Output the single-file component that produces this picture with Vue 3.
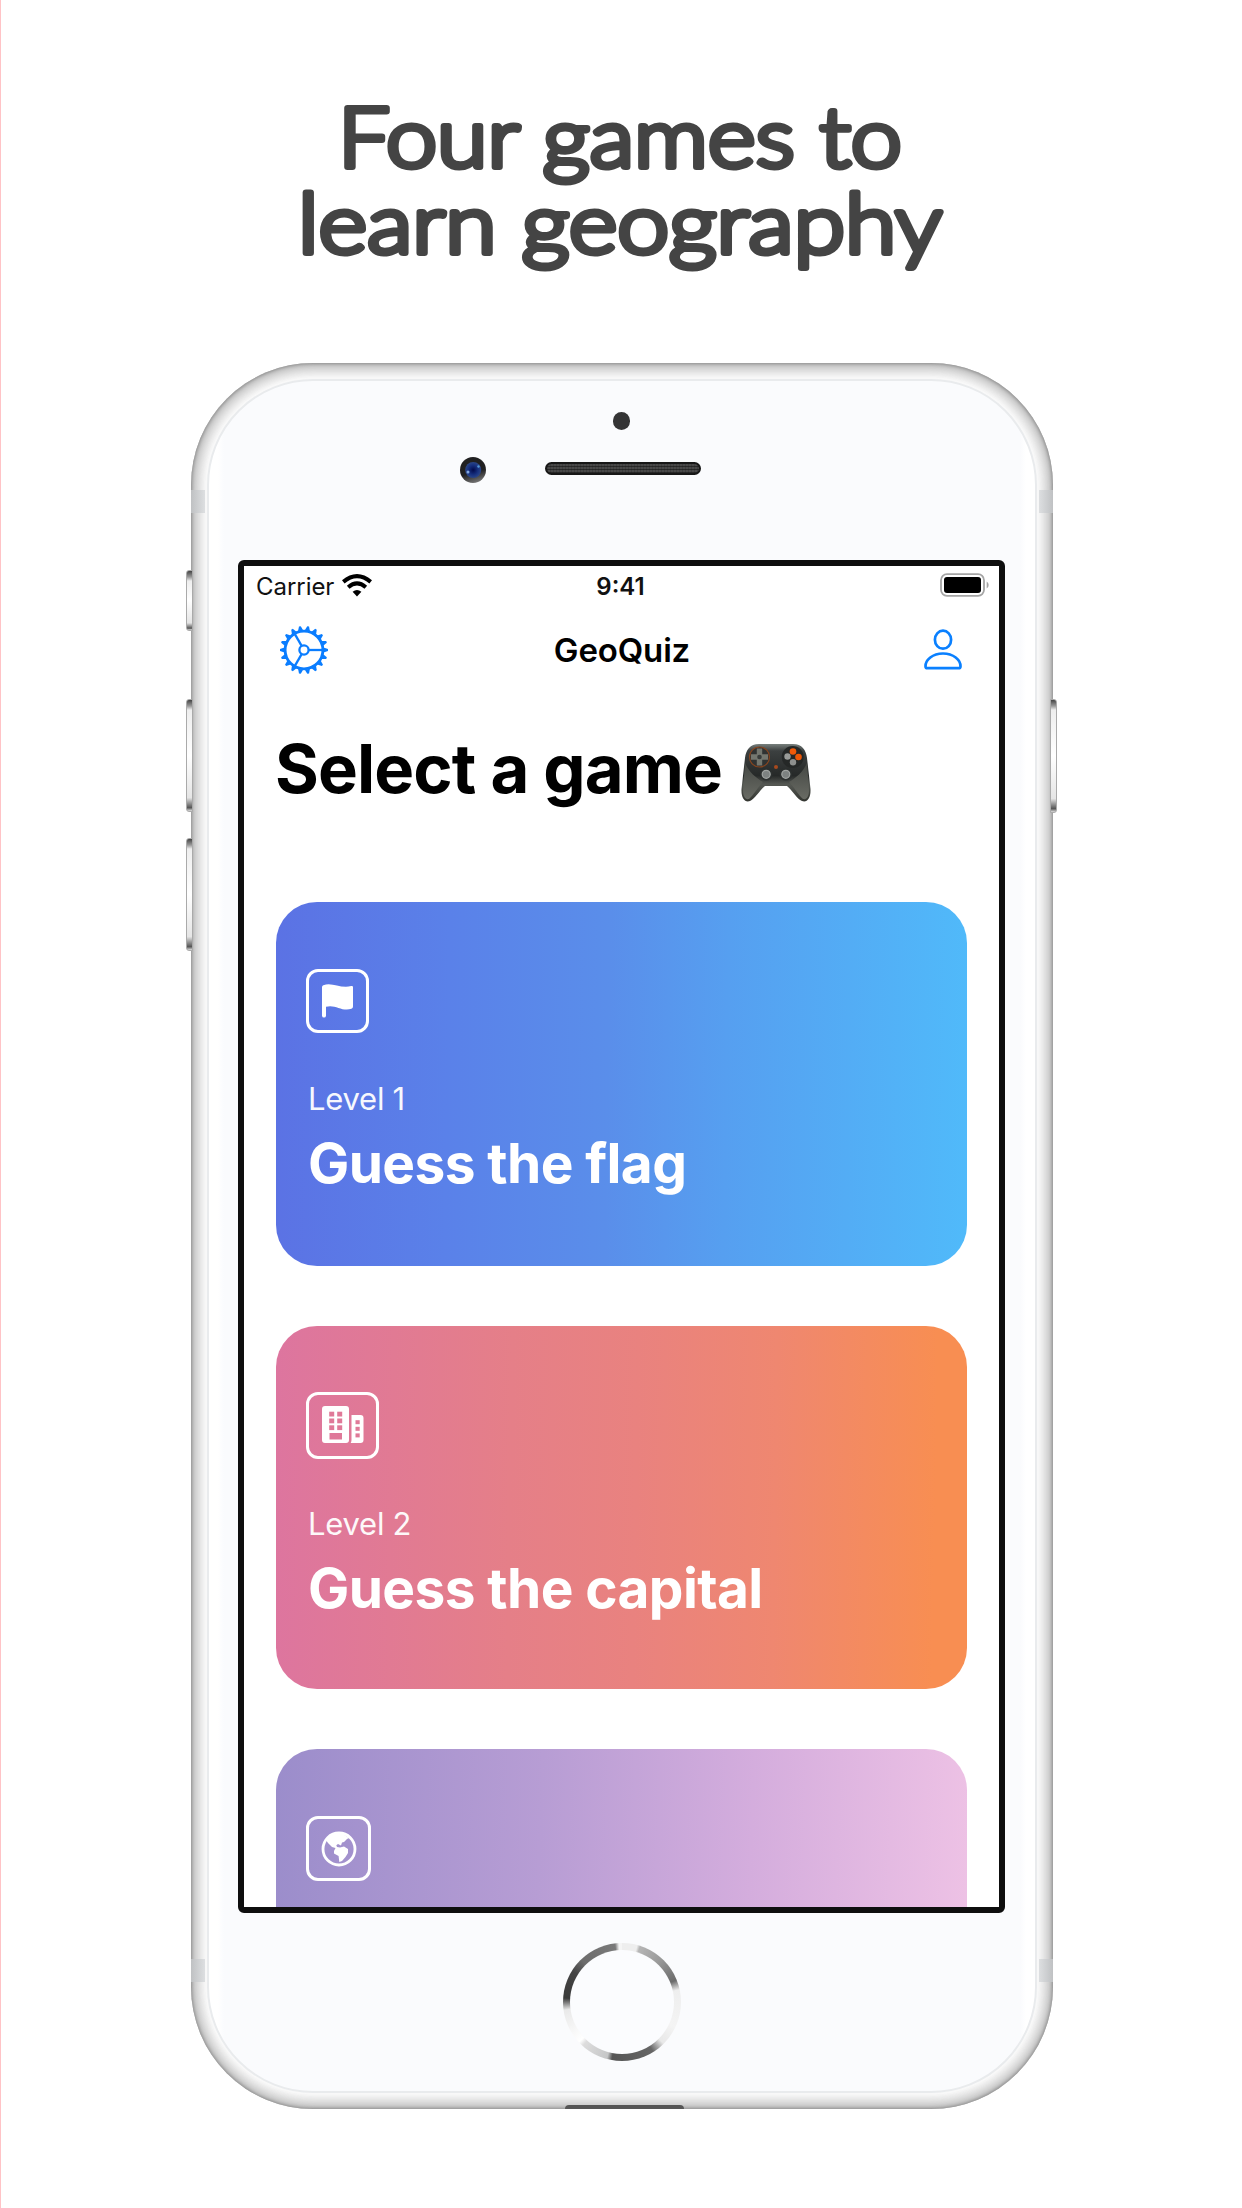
<script setup>
const games = [
  { id: 'flag', level: 'Level 1', title: 'Guess the flag', tint: 'blue' },
  { id: 'city', level: 'Level 2', title: 'Guess the capital', tint: 'coral' },
  { id: 'globe', tint: 'violet' },
]
const teeth = Array.from({ length: 18 }, (_, i) => i * 20)
const windows = [0, 1, 2]
</script>

<template>
  <main class="page">
    <svg class="headline" width="1242" height="300" viewBox="0 0 1242 300">
      <text x="338" y="166.5" textLength="564" lengthAdjust="spacingAndGlyphs">Four games to</text>
      <text x="298" y="252.5" textLength="644" lengthAdjust="spacingAndGlyphs">learn geography</text>
    </svg>

    <div class="phone">
      <i class="key mute"></i><i class="key up"></i><i class="key down"></i><i class="key power"></i>
      <i class="band tl"></i><i class="band tr"></i><i class="band bl"></i><i class="band br"></i>
      <i class="port"></i>
      <div class="face">
        <header class="sensors">
          <span class="dot"></span>
          <div class="earpiece">
            <svg class="camera" width="26" height="26" viewBox="0 0 26 26">
              <defs>
                <linearGradient id="rim" x1="0.3" y1="0" x2="0.6" y2="1"><stop offset=".6" stop-color="#202021" /><stop offset="1" stop-color="#777" /></linearGradient>
                <radialGradient id="lens"><stop offset="0" stop-color="#020a4c" /><stop offset=".6" stop-color="#16307f" /><stop offset="1" stop-color="#2b4687" /></radialGradient>
              </defs>
              <circle cx="13" cy="13" r="13" fill="url(#rim)" />
              <circle cx="13.2" cy="13" r="8" fill="url(#lens)" />
              <circle cx="8" cy="15" r="1.5" fill="#83a8e0" /><circle cx="18.5" cy="9.5" r="1.2" fill="#5599d8" />
            </svg>
            <span class="grille"></span>
          </div>
        </header>

        <section class="screen">
          <div class="status">
            <div class="network">
              <span class="carrier">Carrier</span>
              <svg width="30" height="23" viewBox="0 0 30 23" fill="none" stroke="#000">
                <path d="M1.3 7.9Q15-3.7 28.7 7.9" stroke-width="4" />
                <path d="M6.2 13.2Q15 5.6 23.8 13.2" stroke-width="4" />
                <path d="M15 22.5L10.6 17.8Q15 14 19.4 17.8Z" fill="#000" stroke="none" />
              </svg>
            </div>
            <span class="clock">9:41</span>
            <svg class="battery" width="50" height="24" viewBox="0 0 50 24">
              <rect x="1" y="1.2" width="43" height="21.6" rx="6" fill="#fff" stroke="#a5a5a5" stroke-width="1.8" />
              <rect x="4" y="4" width="37" height="16" rx="3" />
              <path d="M46.7 8.5q2 1 2 3.5t-2 3.5z" fill="#a5a5a5" />
            </svg>
          </div>

          <nav class="bar">
            <svg width="50" height="50" viewBox="-25 -25 50 50" fill="none" stroke="#0a7dff">
              <circle r="18.9" stroke-width="2.8" /><circle r="4.6" stroke-width="2.3" />
              <path v-for="a in teeth" :key="a" d="M19.5-2.6L24-.9V.9L19.5 2.6Z" fill="#0a7dff" stroke="none" :transform="`rotate(${a})`" />
              <path v-for="a in [0, 120, 240]" :key="'s' + a" d="M5 0H18" stroke-width="2.3" :transform="`rotate(${a})`" />
            </svg>
            <span class="name">GeoQuiz</span>
            <svg width="40" height="42" viewBox="0 0 40 42" fill="none" stroke="#0a80ff" stroke-width="2.7">
              <ellipse cx="20" cy="10.7" rx="8.1" ry="9" />
              <path d="M4.4 39.2H35.6Q37.5 39.2 37.5 37.2C37.5 31 30.5 24.5 20 24.5S2.5 31 2.5 37.2Q2.5 39.2 4.4 39.2Z" />
            </svg>
          </nav>

          <h1>
            <span>Select a game</span>
            <svg class="pad" width="70" height="60" viewBox="0 0 70 60" role="img" aria-label="Game controller">
              <defs>
                <linearGradient id="shell" x1="0" y1="0" x2="0" y2="1"><stop offset="0" stop-color="#78807d" /><stop offset=".12" stop-color="#3c4040" /><stop offset=".55" stop-color="#262928" /><stop offset=".7" stop-color="#555853" /><stop offset="1" stop-color="#333530" /></linearGradient>
                <linearGradient id="grip" x1="0" y1="0" x2="0" y2="1"><stop offset="0" stop-color="#444743" /><stop offset="1" stop-color="#696b64" /></linearGradient>
              </defs>
              <path d="M18 1H52C61 1 65 7 66 15L69.5 46C70 55 66 60 61 58C56 56 51 47 46 43H24C19 47 14 56 9 58C4 60 0 55 .5 46L4 15C5 7 9 1 18 1Z" fill="url(#shell)" />
              <path d="M4 20C8 29 15 35 22 39C17 44 12 53 8 56C4 57 2 53 2 47ZM66 20C62 29 55 35 48 39C53 44 58 53 62 56C66 57 68 53 68 47Z" fill="url(#grip)" />
              <circle cx="18.5" cy="14" r="10" fill="#303332" stroke="#87451f" stroke-width="1.2" />
              <path d="M15.8 5.5H21.2V11.3H27V16.7H21.2V22.5H15.8V16.7H10V11.3H15.8Z" fill="#74776f" />
              <circle cx="18.5" cy="14" r="2.3" fill="#3a3d3b" />
              <circle cx="51.7" cy="14" r="11" fill="#252827" />
              <circle cx="52" cy="8.5" r="3.3" fill="#f15a09" /><circle cx="57.5" cy="14" r="3.3" fill="#ed5706" />
              <circle cx="46.5" cy="13.5" r="3.2" fill="#999b98" /><circle cx="52" cy="19.3" r="3.2" fill="#8e908e" />
              <circle cx="25.2" cy="31.3" r="6.3" fill="#2c302f" /><circle cx="44.8" cy="31.3" r="6.3" fill="#2c302f" />
              <circle cx="25.2" cy="31.3" r="4" fill="#7d8281" stroke="#a0a4a2" stroke-width="1.2" /><circle cx="44.8" cy="31.3" r="4" fill="#7d8281" stroke="#a0a4a2" stroke-width="1.2" />
              <circle cx="35" cy="24" r="2" fill="#a74a1e" />
            </svg>
          </h1>

          <article v-for="g in games" :key="g.id" class="card" :class="g.tint">
            <div class="badge" :class="g.id">
              <svg v-if="g.id === 'flag'" width="31" height="34" viewBox="0 0 31 34" fill="#fff">
                <path d="M0 3.2Q0 1.8 1.3 1.2C10-2.4 18 4.8 29.3 2.1Q31 1.7 31 3.2V22.5Q31 24.2 29.4 24.8C20 28 13 19.8 4 22.8V31.7Q4 33.5 2 33.5T0 31.7Z" />
              </svg>
              <svg v-else-if="g.id === 'city'" width="42" height="38" viewBox="0 0 42 38" fill="#fff">
                <path fill-rule="evenodd" d="M3 0H24Q27 0 27 3V34Q27 37 24 37H3Q0 37 0 34V3Q0 0 3 0ZM7.5 27V33.5H20V27Z" />
                <path d="M29.5 9H38.5Q41.5 9 41.5 12V34Q41.5 37 38.5 37H28.7Q29.5 35.5 29.5 34Z" />
                <g class="cutout">
                  <template v-for="w in windows" :key="w">
                    <rect x="7.2" :y="5.7 + w * 6.8" width="5" height="4.8" /><rect x="15.2" :y="5.7 + w * 6.8" width="5" height="4.8" />
                    <rect x="33.5" :y="14.2 + w * 6.6" width="4.2" height="4" />
                  </template>
                </g>
              </svg>
              <svg v-else width="36" height="36" viewBox="0 0 36 36" fill="#fff">
                <circle cx="18" cy="18" r="16" fill="none" stroke="#fff" stroke-width="2.8" />
                <path d="M5 9C9 3 15 1.5 22 3L28 7L26 8L23 11L21 11.5L20 14.5L17 13L15.3 14.2L16 16L19 16.5L23 15.5L27 18V22L24.5 26L21 30L18.3 31L17.6 25L13 22.5V20L14.5 17L11 16L7 12Z" />
              </svg>
            </div>
            <p v-if="g.level" class="level">{{ g.level }}</p>
            <h2 v-if="g.title">{{ g.title }}</h2>
          </article>
        </section>

        <footer class="chin"><span class="home"><b></b></span></footer>
      </div>
    </div>
  </main>
</template>

<style>
body { margin: 0; background: #fff; }
</style>

<style scoped>
* { box-sizing: border-box; }
.page { width: 1242px; height: 2208px; overflow: hidden; display: flex; flex-direction: column; align-items: center; background: #fff; border-left: 1px solid #ffc3c6; font-family: Inter, "Liberation Sans", sans-serif; }
.headline { flex: none; width: 1242px; height: 300px; margin-left: -1px; }
.headline text { font: 300 82px Lato, sans-serif; fill: #444; stroke: #444; stroke-width: 6px; stroke-linejoin: round; }
.phone { position: relative; flex: none; width: 862px; height: 1746px; margin-top: 63px; padding: 16px; border-radius: 122px; background: #fbfbfb; box-shadow: inset 0 0 3px 1px #929292, inset 0 0 9px 5px #b8b8b8, inset 0 0 5px 13px #ededed; }
.face { width: 830px; height: 1714px; border: 2px solid #e9ebed; border-radius: 106px; background: linear-gradient(90deg, #fff 9px, #fafbfd 15px, #fafbfd 811px, #fff 817px); display: flex; flex-direction: column; align-items: center; }
.sensors { width: 100%; height: 179px; display: flex; flex-direction: column; align-items: center; padding-top: 31px; }
.dot { width: 17.5px; height: 17.5px; border-radius: 50%; background: #343435; }
.earpiece { width: 240px; height: 26px; margin: 27.5px 84px 0 0; display: flex; align-items: center; justify-content: space-between; }
.grille { width: 156px; height: 13px; margin: 0 -1px 3px 0; border-radius: 7px; border: 2px solid #171717; background: repeating-linear-gradient(90deg, #1113 0 1px, transparent 1px 3px), repeating-linear-gradient(0deg, #292929 0 1px, #484848 1px 3px); }
.screen { flex: none; width: 767px; height: 1353px; border: 6px solid #0e0e0e; border-radius: 6px; background: #fff; overflow: hidden; padding: 0 31px 0 32px; display: flex; flex-direction: column; }
.status { flex: none; height: 40px; margin: 0 -20px 0 -21px; display: grid; grid-template-columns: 1fr auto 1fr; align-items: center; font-size: 24px; color: #111; }
.network { display: flex; align-items: center; gap: 8px; padding-left: 1px; letter-spacing: -.05px; }
.network svg { margin-top: -1px; }
.clock { font-weight: 600; letter-spacing: 0; margin-left: -2px; }
.battery { justify-self: end; margin: -2px -2px 0 0; }
.bar { flex: none; height: 90px; display: flex; align-items: center; justify-content: space-between; padding: 0 5px 2px 3px; }
.bar svg { margin-left: -.5px; }
.name { font-size: 33px; font-weight: 600; letter-spacing: -.15px; margin-left: -8px; }
h1 { flex: none; height: 120px; margin: 13px 0 0 -1px; display: flex; align-items: center; gap: 19px; font-size: 67px; line-height: 80px; font-weight: 700; letter-spacing: -.9px; white-space: nowrap; }
.pad { margin-top: 7px; }
.card { flex: none; height: 363.5px; width: 691px; border-radius: 41px; padding: 67px 33px 0 30px; margin-bottom: 60.2px; color: #fff; }
.blue { margin-top: 73px; background: linear-gradient(91deg, #5b72e4, #5a81e9 25%, #5a8eea 48%, #569ff0 65%, #50bafa 100%); }
.coral { background: linear-gradient(91deg, #dd759f, #e57f88 34%, #e9827f 52%, #ef8770 72%, #f88e52 95%); }
.violet { background: linear-gradient(92deg, #9b8dcb, #b79dd4 38%, #d4addd 68%, #eec2e5); }
.badge { width: 63px; height: 64px; border: 3px solid #fff; border-radius: 12px; display: flex; align-items: center; justify-content: center; }
.city { width: 73px; height: 67px; margin-top: -1px; }
.globe { width: 65px; height: 65px; }
.cutout { fill: #e07998; }
.level { margin: 47px 0 0 2px; font-size: 31px; line-height: 38px; font-weight: 400; letter-spacing: -.25px; opacity: .95; }
.coral .level { margin-top: 46px; }
h2 { margin: 12px 0 0 2px; font-size: 55px; line-height: 66px; font-weight: 700; letter-spacing: -.6px; white-space: nowrap; }
.chin { width: 100%; height: 178px; display: flex; justify-content: center; padding-top: 29.5px; }
.home { width: 118px; height: 118px; padding: 7px; border-radius: 50%; background: conic-gradient(#eee 0 15deg, #b5b5b5 18deg, #9a9a9a 42deg, #6b6b6b 68deg, #eee 78deg, #f4f4f4 115deg, #e8e8e8 135deg, #666 148deg, #555 190deg, #c5c6c7 195deg, #ddd 222deg, #fff 227deg, #e9e9e9 262deg, #3a3a3a 274deg, #444 302deg, #6c6c6c 316deg, #7a7a7a 353deg, #f5f5f5 357deg); }
.home b { display: block; width: 100%; height: 100%; border-radius: 50%; background: #fbfcfe; }
.key { position: absolute; left: -5px; width: 7px; border: 1px solid #aaa; border-radius: 3px 0 0 3px; background: linear-gradient(#444 0, #999 6px, #eee 10px, #fff 50%, #e5e5e5 88%, #555 97%, #ddd); }
.mute { top: 207px; height: 61px; }
.up { top: 336px; height: 113px; }
.down { top: 475px; height: 113px; }
.power { left: auto; right: -4px; top: 336px; height: 114px; border-radius: 0 3px 3px 0; }
.band { position: absolute; width: 14px; height: 23px; background: linear-gradient(90deg, #bfc1c3, #dddfe1); }
.tl { left: 0; top: 127px; }
.tr { right: 0; top: 127px; transform: scaleX(-1); }
.bl { left: 0; top: 1596px; }
.br { right: 0; top: 1596px; transform: scaleX(-1); }
.port { position: absolute; left: 374px; bottom: 0; width: 119px; height: 4px; border-radius: 10px 10px 0 0; background: #555; }
</style>
